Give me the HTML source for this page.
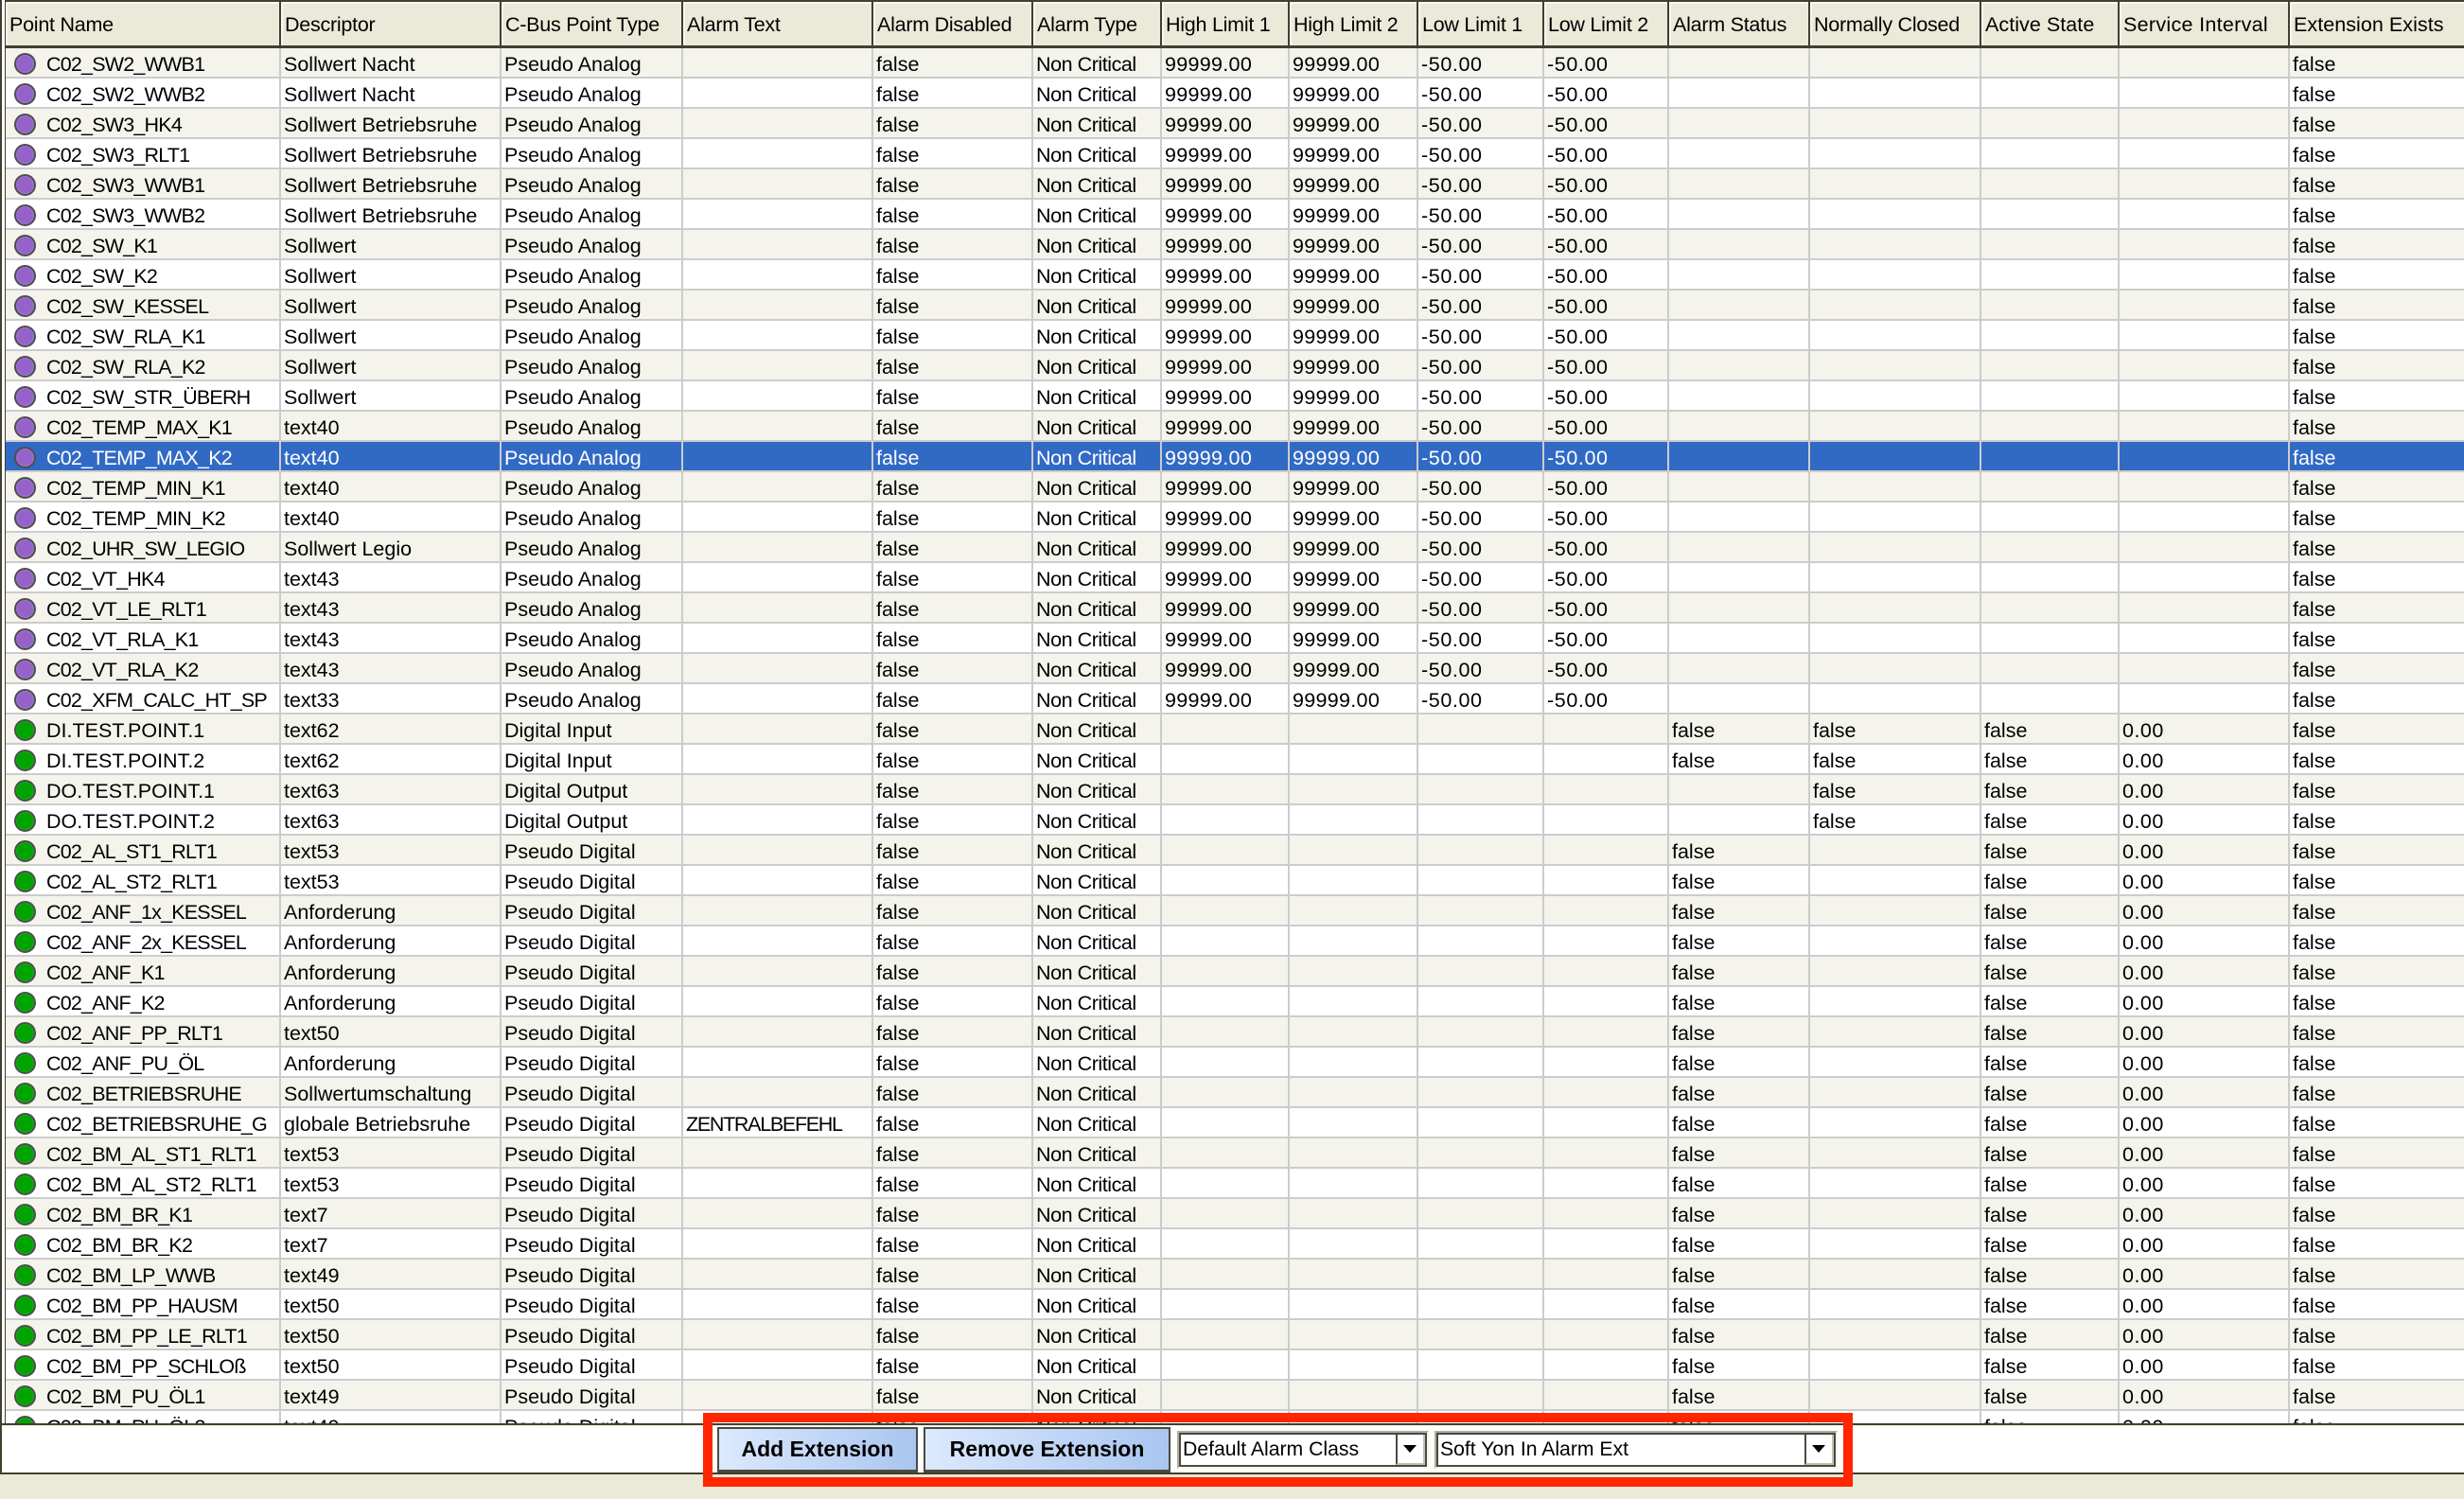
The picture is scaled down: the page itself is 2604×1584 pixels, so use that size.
<!DOCTYPE html>
<html>
<head>
<meta charset="utf-8">
<style>
html,body{margin:0;padding:0;background:#ebe9d8}
body{width:2604px;height:1584px;position:relative;overflow:hidden;font-family:"Liberation Sans",Arial,sans-serif;font-size:21.5px;color:#000}
#wrap{position:absolute;left:0;top:0;width:2604px;height:1504px;overflow:hidden;background:#fff}
#wrap:before{content:"";position:absolute;left:0;top:0;width:1.5px;height:1504px;background:#403f30}
#wrap:after{content:"";position:absolute;left:4.5px;top:0;width:1.5px;height:1504px;background:#403f30}
table{position:absolute;left:6px;top:0;border-collapse:separate;border-spacing:0;table-layout:fixed;width:2598px}
th{box-sizing:border-box;height:51px;background:#ebe9d8;border-top:2px solid #403f30;border-bottom:3px solid #403f30;border-right:2px solid #403f30;box-shadow:inset 2px 2px 0 #f8f7ef;text-align:left;font-weight:normal;padding:3px 0 0 4px;white-space:nowrap;overflow:hidden;letter-spacing:-.25px}
th:last-child{border-right:0;letter-spacing:.05px}
th:nth-child(14){letter-spacing:.3px}
th:nth-child(13){letter-spacing:.05px}
td{box-sizing:border-box;height:32px;border-right:2px solid #ccc;border-bottom:2px solid #ccc;padding:4px 0 0 3px;line-height:26px;white-space:nowrap;overflow:hidden;vertical-align:top}
td:last-child{border-right:0}
td:first-child{padding-left:43px;letter-spacing:-.8px}
td.t{letter-spacing:0}
td:nth-child(4){letter-spacing:-1.3px}
td:nth-child(6){letter-spacing:-.45px}
td:nth-child(7),td:nth-child(8){letter-spacing:.3px}
td:nth-child(9),td:nth-child(10){letter-spacing:.6px}
td:nth-child(14){letter-spacing:.5px}
tbody tr:nth-child(odd) td{background:#f4f3ec}
tbody tr.s td{background:#316ac5;color:#fff}
i{position:absolute;width:23px;height:23px;box-sizing:border-box;margin:1px 0 0 -34px;border-radius:50%;border:2px solid #4e4e4e}
i.a{background:radial-gradient(circle,#9562c9 0,#9562c9 55%,#b69ade 100%)}
i.d{background:radial-gradient(circle,#00a400 0,#00a400 55%,#38b838 100%)}
#sep{position:absolute;left:0;top:1504px;width:2604px;height:2px;background:#403f30}
#panel{position:absolute;left:0;top:1506px;width:2604px;height:50px;background:#fff;border-top:1px solid #f5f4e4;box-sizing:border-box}
#panel:before{content:"";position:absolute;left:0;top:-2px;width:2px;height:53px;background:#403f30}
#bot{position:absolute;left:0;top:1556px;width:2604px;height:2px;background:#403f30}
.btn{position:absolute;top:1508px;box-sizing:border-box;border:2px solid #4a4a40;border-bottom-width:3px;background:linear-gradient(90deg,#dce9fd,#a9c6f0);text-align:center;font-weight:bold;font-size:23px;line-height:43px}
.cb{position:absolute;top:1512px;height:40px;box-sizing:border-box;border-top:2px solid #b0aea0;border-left:2px solid #b0aea0;border-right:2px solid #f9f7ea;border-bottom:2px solid #f9f7ea;font-size:21.2px}
.in{position:absolute;left:0;right:0;top:0;bottom:0;border:2px solid #4a4a40;background:#fff;line-height:31px;padding-left:2px;white-space:nowrap;overflow:hidden}
.in b{position:absolute;right:0;top:0;bottom:0;width:31px;border-left:2px solid #4a4a40;border-right:2px solid #c4c2b4;border-bottom:2px solid #c4c2b4;background:#fff;box-sizing:border-box}
.in b:after{content:"";position:absolute;left:6px;top:11px;border-left:7px solid transparent;border-right:7px solid transparent;border-top:8px solid #000}
#red{position:absolute;left:743px;top:1493px;width:1215px;height:78px;box-sizing:border-box;border:10px solid #ff2600}
</style>
</head>
<body>
<div id="wrap">
<table>
<colgroup><col style="width:291px"><col style="width:233px"><col style="width:192px"><col style="width:201px"><col style="width:169px"><col style="width:136px"><col style="width:135px"><col style="width:136px"><col style="width:133px"><col style="width:132px"><col style="width:149px"><col style="width:181px"><col style="width:146px"><col style="width:180px"><col style="width:184px"></colgroup>
<thead><tr><th>Point Name</th><th>Descriptor</th><th>C-Bus Point Type</th><th>Alarm Text</th><th>Alarm Disabled</th><th>Alarm Type</th><th>High Limit 1</th><th>High Limit 2</th><th>Low Limit 1</th><th>Low Limit 2</th><th>Alarm Status</th><th>Normally Closed</th><th>Active State</th><th>Service Interval</th><th>Extension Exists</th></tr></thead>
<tbody>
<tr><td><i class=a></i>C02_SW2_WWB1<td>Sollwert Nacht<td>Pseudo Analog<td><td>false<td>Non Critical<td>99999.00<td>99999.00<td>-50.00<td>-50.00<td><td><td><td><td>false
<tr><td><i class=a></i>C02_SW2_WWB2<td>Sollwert Nacht<td>Pseudo Analog<td><td>false<td>Non Critical<td>99999.00<td>99999.00<td>-50.00<td>-50.00<td><td><td><td><td>false
<tr><td><i class=a></i>C02_SW3_HK4<td>Sollwert Betriebsruhe<td>Pseudo Analog<td><td>false<td>Non Critical<td>99999.00<td>99999.00<td>-50.00<td>-50.00<td><td><td><td><td>false
<tr><td><i class=a></i>C02_SW3_RLT1<td>Sollwert Betriebsruhe<td>Pseudo Analog<td><td>false<td>Non Critical<td>99999.00<td>99999.00<td>-50.00<td>-50.00<td><td><td><td><td>false
<tr><td><i class=a></i>C02_SW3_WWB1<td>Sollwert Betriebsruhe<td>Pseudo Analog<td><td>false<td>Non Critical<td>99999.00<td>99999.00<td>-50.00<td>-50.00<td><td><td><td><td>false
<tr><td><i class=a></i>C02_SW3_WWB2<td>Sollwert Betriebsruhe<td>Pseudo Analog<td><td>false<td>Non Critical<td>99999.00<td>99999.00<td>-50.00<td>-50.00<td><td><td><td><td>false
<tr><td><i class=a></i>C02_SW_K1<td>Sollwert<td>Pseudo Analog<td><td>false<td>Non Critical<td>99999.00<td>99999.00<td>-50.00<td>-50.00<td><td><td><td><td>false
<tr><td><i class=a></i>C02_SW_K2<td>Sollwert<td>Pseudo Analog<td><td>false<td>Non Critical<td>99999.00<td>99999.00<td>-50.00<td>-50.00<td><td><td><td><td>false
<tr><td><i class=a></i>C02_SW_KESSEL<td>Sollwert<td>Pseudo Analog<td><td>false<td>Non Critical<td>99999.00<td>99999.00<td>-50.00<td>-50.00<td><td><td><td><td>false
<tr><td><i class=a></i>C02_SW_RLA_K1<td>Sollwert<td>Pseudo Analog<td><td>false<td>Non Critical<td>99999.00<td>99999.00<td>-50.00<td>-50.00<td><td><td><td><td>false
<tr><td><i class=a></i>C02_SW_RLA_K2<td>Sollwert<td>Pseudo Analog<td><td>false<td>Non Critical<td>99999.00<td>99999.00<td>-50.00<td>-50.00<td><td><td><td><td>false
<tr><td><i class=a></i>C02_SW_STR_ÜBERH<td>Sollwert<td>Pseudo Analog<td><td>false<td>Non Critical<td>99999.00<td>99999.00<td>-50.00<td>-50.00<td><td><td><td><td>false
<tr><td><i class=a></i>C02_TEMP_MAX_K1<td>text40<td>Pseudo Analog<td><td>false<td>Non Critical<td>99999.00<td>99999.00<td>-50.00<td>-50.00<td><td><td><td><td>false
<tr class=s><td><i class=a></i>C02_TEMP_MAX_K2<td>text40<td>Pseudo Analog<td><td>false<td>Non Critical<td>99999.00<td>99999.00<td>-50.00<td>-50.00<td><td><td><td><td>false
<tr><td><i class=a></i>C02_TEMP_MIN_K1<td>text40<td>Pseudo Analog<td><td>false<td>Non Critical<td>99999.00<td>99999.00<td>-50.00<td>-50.00<td><td><td><td><td>false
<tr><td><i class=a></i>C02_TEMP_MIN_K2<td>text40<td>Pseudo Analog<td><td>false<td>Non Critical<td>99999.00<td>99999.00<td>-50.00<td>-50.00<td><td><td><td><td>false
<tr><td><i class=a></i>C02_UHR_SW_LEGIO<td>Sollwert Legio<td>Pseudo Analog<td><td>false<td>Non Critical<td>99999.00<td>99999.00<td>-50.00<td>-50.00<td><td><td><td><td>false
<tr><td><i class=a></i>C02_VT_HK4<td>text43<td>Pseudo Analog<td><td>false<td>Non Critical<td>99999.00<td>99999.00<td>-50.00<td>-50.00<td><td><td><td><td>false
<tr><td><i class=a></i>C02_VT_LE_RLT1<td>text43<td>Pseudo Analog<td><td>false<td>Non Critical<td>99999.00<td>99999.00<td>-50.00<td>-50.00<td><td><td><td><td>false
<tr><td><i class=a></i>C02_VT_RLA_K1<td>text43<td>Pseudo Analog<td><td>false<td>Non Critical<td>99999.00<td>99999.00<td>-50.00<td>-50.00<td><td><td><td><td>false
<tr><td><i class=a></i>C02_VT_RLA_K2<td>text43<td>Pseudo Analog<td><td>false<td>Non Critical<td>99999.00<td>99999.00<td>-50.00<td>-50.00<td><td><td><td><td>false
<tr><td><i class=a></i>C02_XFM_CALC_HT_SP<td>text33<td>Pseudo Analog<td><td>false<td>Non Critical<td>99999.00<td>99999.00<td>-50.00<td>-50.00<td><td><td><td><td>false
<tr><td class=t><i class=d></i>DI.TEST.POINT.1<td>text62<td>Digital Input<td><td>false<td>Non Critical<td><td><td><td><td>false<td>false<td>false<td>0.00<td>false
<tr><td class=t><i class=d></i>DI.TEST.POINT.2<td>text62<td>Digital Input<td><td>false<td>Non Critical<td><td><td><td><td>false<td>false<td>false<td>0.00<td>false
<tr><td class=t><i class=d></i>DO.TEST.POINT.1<td>text63<td>Digital Output<td><td>false<td>Non Critical<td><td><td><td><td><td>false<td>false<td>0.00<td>false
<tr><td class=t><i class=d></i>DO.TEST.POINT.2<td>text63<td>Digital Output<td><td>false<td>Non Critical<td><td><td><td><td><td>false<td>false<td>0.00<td>false
<tr><td><i class=d></i>C02_AL_ST1_RLT1<td>text53<td>Pseudo Digital<td><td>false<td>Non Critical<td><td><td><td><td>false<td><td>false<td>0.00<td>false
<tr><td><i class=d></i>C02_AL_ST2_RLT1<td>text53<td>Pseudo Digital<td><td>false<td>Non Critical<td><td><td><td><td>false<td><td>false<td>0.00<td>false
<tr><td><i class=d></i>C02_ANF_1x_KESSEL<td>Anforderung<td>Pseudo Digital<td><td>false<td>Non Critical<td><td><td><td><td>false<td><td>false<td>0.00<td>false
<tr><td><i class=d></i>C02_ANF_2x_KESSEL<td>Anforderung<td>Pseudo Digital<td><td>false<td>Non Critical<td><td><td><td><td>false<td><td>false<td>0.00<td>false
<tr><td><i class=d></i>C02_ANF_K1<td>Anforderung<td>Pseudo Digital<td><td>false<td>Non Critical<td><td><td><td><td>false<td><td>false<td>0.00<td>false
<tr><td><i class=d></i>C02_ANF_K2<td>Anforderung<td>Pseudo Digital<td><td>false<td>Non Critical<td><td><td><td><td>false<td><td>false<td>0.00<td>false
<tr><td><i class=d></i>C02_ANF_PP_RLT1<td>text50<td>Pseudo Digital<td><td>false<td>Non Critical<td><td><td><td><td>false<td><td>false<td>0.00<td>false
<tr><td><i class=d></i>C02_ANF_PU_ÖL<td>Anforderung<td>Pseudo Digital<td><td>false<td>Non Critical<td><td><td><td><td>false<td><td>false<td>0.00<td>false
<tr><td><i class=d></i>C02_BETRIEBSRUHE<td>Sollwertumschaltung<td>Pseudo Digital<td><td>false<td>Non Critical<td><td><td><td><td>false<td><td>false<td>0.00<td>false
<tr><td><i class=d></i>C02_BETRIEBSRUHE_G<td>globale Betriebsruhe<td>Pseudo Digital<td>ZENTRALBEFEHL<td>false<td>Non Critical<td><td><td><td><td>false<td><td>false<td>0.00<td>false
<tr><td><i class=d></i>C02_BM_AL_ST1_RLT1<td>text53<td>Pseudo Digital<td><td>false<td>Non Critical<td><td><td><td><td>false<td><td>false<td>0.00<td>false
<tr><td><i class=d></i>C02_BM_AL_ST2_RLT1<td>text53<td>Pseudo Digital<td><td>false<td>Non Critical<td><td><td><td><td>false<td><td>false<td>0.00<td>false
<tr><td><i class=d></i>C02_BM_BR_K1<td>text7<td>Pseudo Digital<td><td>false<td>Non Critical<td><td><td><td><td>false<td><td>false<td>0.00<td>false
<tr><td><i class=d></i>C02_BM_BR_K2<td>text7<td>Pseudo Digital<td><td>false<td>Non Critical<td><td><td><td><td>false<td><td>false<td>0.00<td>false
<tr><td><i class=d></i>C02_BM_LP_WWB<td>text49<td>Pseudo Digital<td><td>false<td>Non Critical<td><td><td><td><td>false<td><td>false<td>0.00<td>false
<tr><td><i class=d></i>C02_BM_PP_HAUSM<td>text50<td>Pseudo Digital<td><td>false<td>Non Critical<td><td><td><td><td>false<td><td>false<td>0.00<td>false
<tr><td><i class=d></i>C02_BM_PP_LE_RLT1<td>text50<td>Pseudo Digital<td><td>false<td>Non Critical<td><td><td><td><td>false<td><td>false<td>0.00<td>false
<tr><td><i class=d></i>C02_BM_PP_SCHLOß<td>text50<td>Pseudo Digital<td><td>false<td>Non Critical<td><td><td><td><td>false<td><td>false<td>0.00<td>false
<tr><td><i class=d></i>C02_BM_PU_ÖL1<td>text49<td>Pseudo Digital<td><td>false<td>Non Critical<td><td><td><td><td>false<td><td>false<td>0.00<td>false
<tr><td><i class=d></i>C02_BM_PU_ÖL2<td>text49<td>Pseudo Digital<td><td>false<td>Non Critical<td><td><td><td><td>false<td><td>false<td>0.00<td>false
</tbody>
</table>
</div>
<div id="sep"></div>
<div id="panel"></div>
<div id="bot"></div>
<div class="btn" style="left:758px;width:212px;height:48px">Add Extension</div>
<div class="btn" style="left:976px;width:261px;height:48px">Remove Extension</div>
<div class="cb" style="left:1244px;width:266px"><div class="in">Default Alarm Class<b></b></div></div>
<div class="cb" style="left:1516px;width:426px"><div class="in">Soft Yon In Alarm Ext<b></b></div></div>
<div id="red"></div>
</body>
</html>
